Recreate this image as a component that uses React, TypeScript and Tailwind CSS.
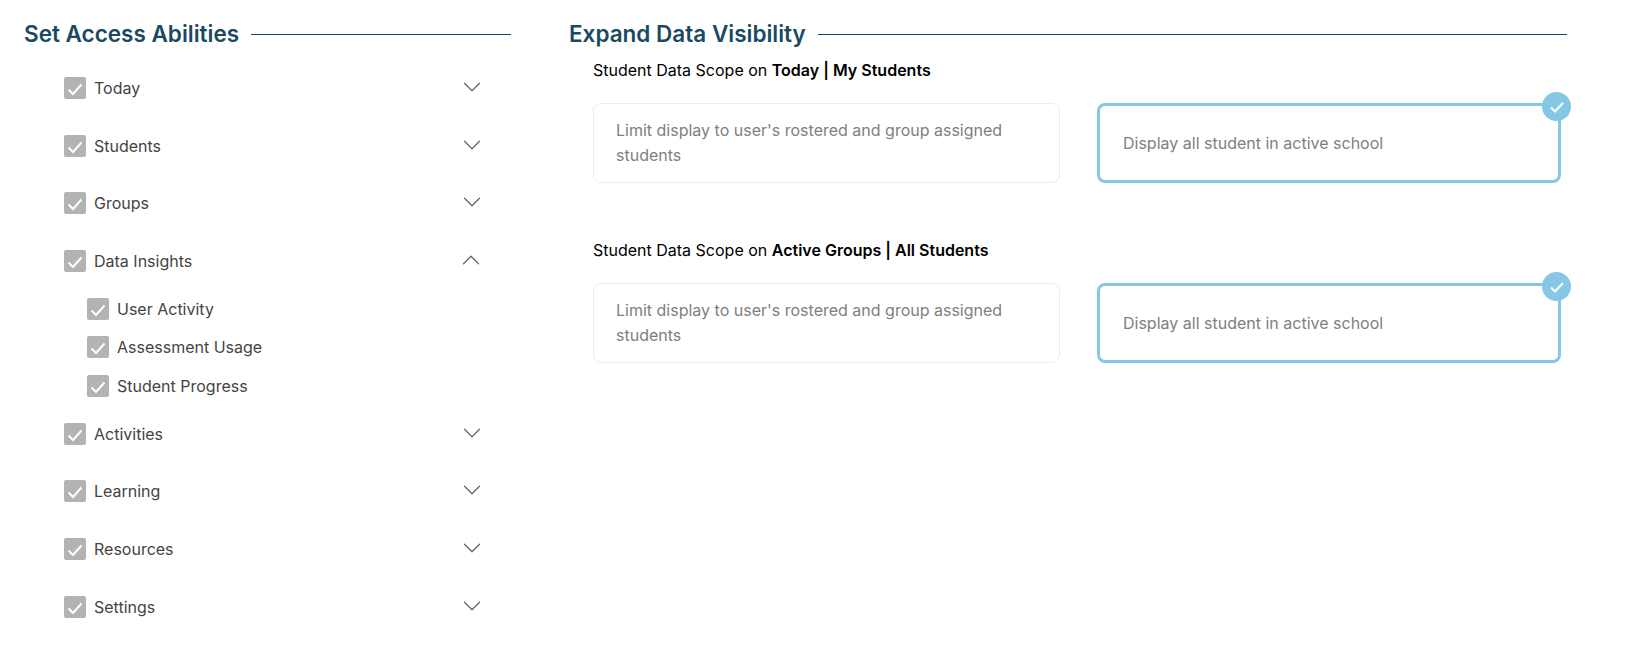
import { ChevronDown, ChevronUp } from 'lucide-react';

const font = { fontFamily: 'Inter, sans-serif' };

const beforeInsights = ['Today', 'Students', 'Groups'];
const afterInsights = ['Activities', 'Learning', 'Resources', 'Settings'];
const insightItems = ['User Activity', 'Assessment Usage', 'Student Progress'];

function CheckBox() {
  return (
    <span className="flex h-[22px] w-[22px] flex-shrink-0 items-center justify-center rounded-[2px] bg-[#b3b3b3]">
      <svg width="18" height="18" viewBox="0 0 18 18" fill="none" className="mt-[2px]">
        <path d="M2.5 9.5L7 14L15.5 4.5" stroke="#ffffff" strokeWidth="2" />
      </svg>
    </span>
  );
}

function Row({ label, open }: { label: string; open?: boolean }) {
  return (
    <div className="flex h-[57.6px] items-start">
      <CheckBox />
      <span className="ml-2 text-base leading-[22px] text-[#444444]">{label}</span>
      {open ? (
        <ChevronUp size={30} strokeWidth={1} className="ml-auto mt-[-5px] mr-[-4px] text-[#666666]" />
      ) : (
        <ChevronDown size={30} strokeWidth={1} className="ml-auto mt-[-5px] mr-[-5px] text-[#666666]" />
      )}
    </div>
  );
}

function SubRow({ label }: { label: string }) {
  return (
    <div className="flex h-[38.5px] items-start">
      <CheckBox />
      <span className="ml-2 text-base leading-[22px] text-[#444444]">{label}</span>
    </div>
  );
}

function Heading({ title }: { title: string }) {
  return (
    <div className="flex items-center gap-3">
      <h2 className="whitespace-nowrap text-[22.5px] font-semibold leading-8 text-[#1a4a5f]">{title}</h2>
      <div className="h-px flex-1 bg-[#1a4a5f]" />
    </div>
  );
}

function ScopeCards() {
  return (
    <div className="mt-[21px] flex gap-[37px]">
      <div className="flex h-[80px] w-[467px] items-center rounded-lg border border-[#e8eef0] pl-[22px] pr-4 text-base leading-[25px] text-[#808080]">
        Limit display to user's rostered and group assigned students
      </div>
      <div className="relative flex h-[80px] w-[464px] items-center rounded-lg border-[3px] border-[#86c8e4] pl-[23px] text-base text-[#808080]">
        Display all student in active school
        <span className="absolute right-[-13px] top-[-14px] flex h-[29px] w-[29px] items-center justify-center rounded-full bg-[#86c8e4]">
          <svg width="18" height="18" viewBox="0 0 18 18" fill="none">
            <path d="M3 9.5L7 13.5L15 5" stroke="#ffffff" strokeWidth="2" />
          </svg>
        </span>
      </div>
    </div>
  );
}

function Scope({ area }: { area: string }) {
  return (
    <div className="h-[180px]">
      <p className="text-base leading-6 text-black">
        Student Data Scope on <b className="font-semibold">{area}</b>
      </p>
      <ScopeCards />
    </div>
  );
}

export default function App() {
  return (
    <div className="flex h-[666px] bg-white pl-6 pr-[62px] pt-[18px]" style={font}>
      <div className="w-[487px] flex-shrink-0">
        <Heading title="Set Access Abilities" />
        <div className="mt-[27px] pl-10 pr-[29px]">
          {beforeInsights.map((label) => (
            <Row key={label} label={label} />
          ))}
          <div className="flex h-[48px] items-start">
            <CheckBox />
            <span className="ml-2 text-base leading-[22px] text-[#444444]">Data Insights</span>
            <ChevronUp size={30} strokeWidth={1} className="ml-auto mt-[-5px] mr-[-4px] text-[#666666]" />
          </div>
          <div className="pl-[23px]">
            {insightItems.map((label) => (
              <SubRow key={label} label={label} />
            ))}
          </div>
          <div className="mt-[9.5px]">
            {afterInsights.map((label) => (
              <Row key={label} label={label} />
            ))}
          </div>
        </div>
      </div>
      <div className="ml-[58px] flex-1">
        <Heading title="Expand Data Visibility" />
        <div className="mt-[8px] pl-6">
          <Scope area="Today | My Students" />
          <Scope area="Active Groups | All Students" />
        </div>
      </div>
    </div>
  );
}
